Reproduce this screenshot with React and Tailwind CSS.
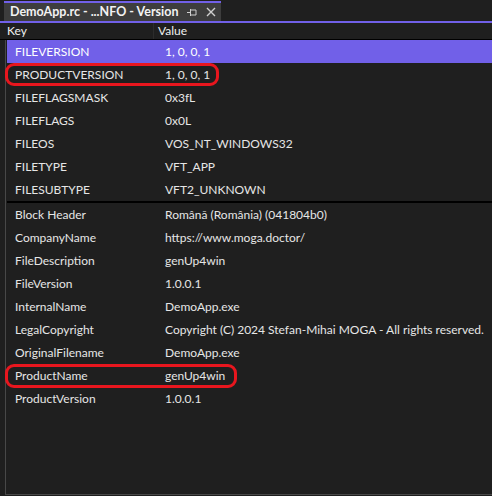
import React from "react";

const group1 = [
  ["FILEVERSION", "1, 0, 0, 1"],
  ["PRODUCTVERSION", "1, 0, 0, 1"],
  ["FILEFLAGSMASK", "0x3fL"],
  ["FILEFLAGS", "0x0L"],
  ["FILEOS", "VOS_NT_WINDOWS32"],
  ["FILETYPE", "VFT_APP"],
  ["FILESUBTYPE", "VFT2_UNKNOWN"],
];

const group2 = [
  ["Block Header", "Română (România) (041804b0)"],
  ["CompanyName", "https://www.moga.doctor/"],
  ["FileDescription", "genUp4win"],
  ["FileVersion", "1.0.0.1"],
  ["InternalName", "DemoApp.exe"],
  ["LegalCopyright", "Copyright (C) 2024 Stefan-Mihai MOGA - All rights reserved."],
  ["OriginalFilename", "DemoApp.exe"],
  ["ProductName", "genUp4win"],
  ["ProductVersion", "1.0.0.1"],
];

function Row({ k, v, selected }) {
  return (
    <div
      className={
        "flex h-[23px] items-center " +
        (selected ? "bg-[#7160e8] text-white" : "text-[#e6e6e6]")
      }
    >
      <div className="w-[158px] shrink-0 pl-[8px] whitespace-nowrap">{k}</div>
      <div className="whitespace-nowrap">{v}</div>
    </div>
  );
}

export default function App() {
  return (
    <div
      className="relative w-[492px] h-[496px] bg-[#1f1f1f] overflow-hidden text-[12px] leading-none"
      style={{ fontFamily: 'Lato, "Noto Sans", sans-serif' }}
    >
      {/* Tab strip */}
      <div className="flex h-[21px] pl-[4px] pt-[1px]">
        <div className="w-[217px] bg-[#3d3d3d] border-t-2 border-[#7160e8] flex items-center pl-[6px] pr-[5px]">
          <span className="font-bold text-[#f2f2f2] text-[12.5px] whitespace-nowrap">
            DemoApp.rc - ...NFO - Version
          </span>
          <div className="ml-auto flex items-center gap-[9px]">
            <svg width="10" height="10" viewBox="0 0 10 10" fill="none" stroke="#d0d0d0" strokeWidth="1">
              <path d="M0 5.5h3M3.5 2v7M3.5 3h5.5v5H3.5" />
            </svg>
            <svg width="10" height="10" viewBox="0 0 10 10" stroke="#d0d0d0" strokeWidth="1.4">
              <path d="M1 1l8 8M9 1l-8 8" />
            </svg>
          </div>
        </div>
      </div>
      <div className="h-[2px] bg-[#7160e8]" />

      {/* Header */}
      <div className="flex h-[17px] items-center text-[#f0f0f0] border-b border-black">
        <div className="w-[154px] pl-[7px] h-full flex items-center border-r border-[#2c2c2c]">Key</div>
        <div className="pl-[4px]">Value</div>
      </div>

      {/* Body */}
      <div className="ml-[5px] mb-[2px] h-[455px] border-l border-b border-[#484848]">
        <div className="pl-[1px]">
          {group1.map(([k, v], i) => (
            <Row key={k} k={k} v={v} selected={i === 0} />
          ))}
        </div>
        <div className="h-[2px] bg-black ml-[1px]" />
        <div className="pl-[1px]">
          {group2.map(([k, v]) => (
            <Row key={k} k={k} v={v} />
          ))}
        </div>
      </div>

      {/* Annotations */}
      <div className="absolute left-[5px] top-[63px] w-[214px] h-[23px] border-[3px] border-[#e8161e] rounded-[9px] pointer-events-none" />
      <div className="absolute left-[5px] top-[364px] w-[232px] h-[24px] border-[3px] border-[#e8161e] rounded-[9px] pointer-events-none" />
    </div>
  );
}
